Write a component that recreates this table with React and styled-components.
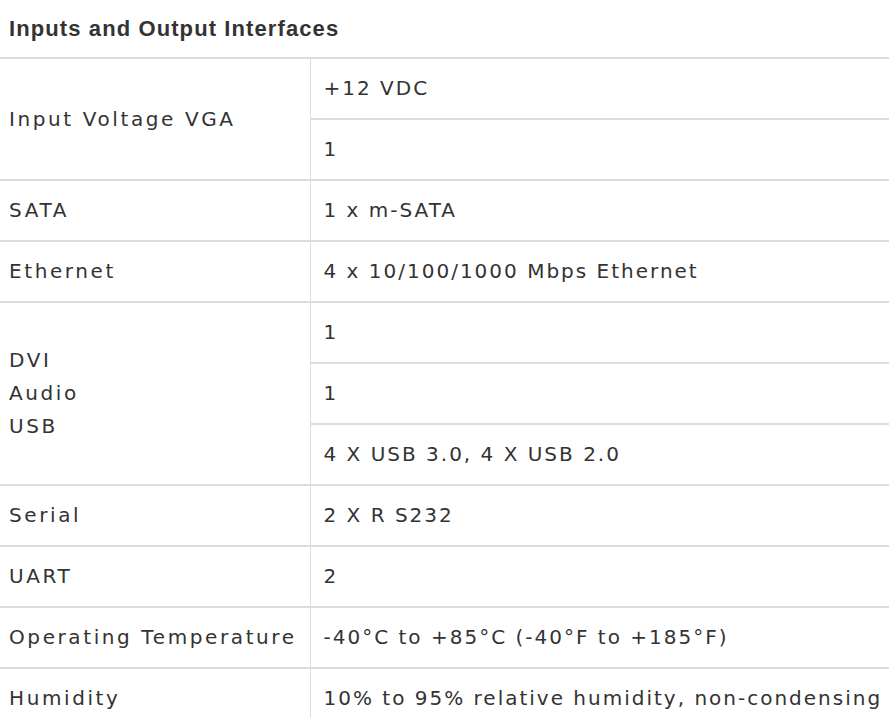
import React from 'react'
import styled, { createGlobalStyle } from 'styled-components'

const GlobalStyle = createGlobalStyle`
  body {
    margin: 0;
    background: #fff;
  }
`

const Wrapper = styled.div`
  width: 889px;
  overflow: hidden;
  font-family: 'DejaVu Sans', 'Noto Sans', sans-serif;
  color: #333;
`

const Title = styled.h3`
  margin: 0;
  height: 57px;
  padding: 0 9px;
  display: flex;
  align-items: center;
  font-family: 'Liberation Sans', Arial, sans-serif;
  font-size: 22px;
  letter-spacing: 1.1px;
  font-weight: 700;
  color: #333;
`

const Table = styled.table`
  border-collapse: collapse;
  width: 900px;
  table-layout: fixed;
`

const Cell = styled.td`
  border-top: 2px solid #dcdcdc;
  border-left: ${(props) => (props.value ? '1px solid #dcdcdc' : 'none')};
  padding: 0 ${(props) => (props.value ? '13px' : '9px')};
  height: 59px;
  font-size: 20px;
  line-height: 33px;
  font-weight: 400;
  white-space: nowrap;
  vertical-align: middle;
  letter-spacing: ${(props) => (props.value ? '2px' : '2.6px')};
`

const rows = [
  { label: ['Input Voltage VGA'], values: ['+12 VDC', '1'] },
  { label: ['SATA'], values: ['1 x m-SATA'] },
  { label: ['Ethernet'], values: ['4 x 10/100/1000 Mbps Ethernet'] },
  { label: ['DVI', 'Audio', 'USB'], values: ['1', '1', '4 X USB 3.0, 4 X USB 2.0'] },
  { label: ['Serial'], values: ['2 X R S232'] },
  { label: ['UART'], values: ['2'] },
  { label: ['Operating Temperature'], values: ['-40°C to +85°C (-40°F to +185°F)'] },
  { label: ['Humidity'], values: ['10% to 95% relative humidity, non-condensing'] },
]

export default function App() {
  return (
    <Wrapper>
      <GlobalStyle />
      <Title>Inputs and Output Interfaces</Title>
      <Table>
        <colgroup>
          <col style={{ width: '310px' }} />
          <col />
        </colgroup>
        <tbody>
          {rows.map((row, i) =>
            row.values.map((v, j) => (
              <tr key={`${i}-${j}`}>
                {j === 0 && (
                  <Cell rowSpan={row.values.length}>
                    {row.label.map((l, k) => (
                      <div key={k}>{l}</div>
                    ))}
                  </Cell>
                )}
                <Cell value>{v}</Cell>
              </tr>
            ))
          )}
        </tbody>
      </Table>
    </Wrapper>
  )
}
